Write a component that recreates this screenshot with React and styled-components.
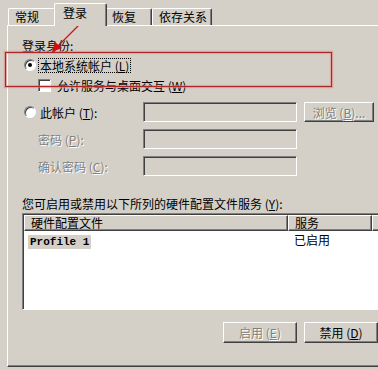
import React from 'react'
import styled, { createGlobalStyle } from 'styled-components'

const Global = createGlobalStyle`
  html, body { margin: 0; padding: 0; background: #d4d0c8; }
  body { font-family: "Noto Sans CJK SC", "DejaVu Sans", sans-serif; font-size: 12px; color: #000; }
`

const Window = styled.div`
  position: relative;
  width: 378px;
  height: 370px;
  overflow: hidden;
  background: #d4d0c8;
  padding: 3px 0 0 7px;
  box-sizing: border-box;
`

const TabRow = styled.div`
  display: flex;
  align-items: flex-end;
  height: 22px;
  padding-left: 1px;
`

const Tab = styled.div`
  position: relative;
  box-sizing: border-box;
  flex: none;
  width: ${p => p.$w}px;
  height: ${p => (p.$active ? '23px' : '17px')};
  margin: ${p => (p.$active ? '0 -2px -1px -2px' : '0')};
  z-index: ${p => (p.$active ? 2 : 1)};
  padding: ${p => (p.$active ? '2px 0 0 8px' : '1px 0 0 6px')};
  background: #d4d0c8;
  border-top: 1px solid #fff;
  border-left: 1px solid #fff;
  border-right: 1px solid #404040;
  box-shadow: inset -1px 0 #808080;
  border-radius: 2px 2px 0 0;
  line-height: 14px;
  white-space: nowrap;
`

const Panel = styled.div`
  display: flex;
  flex-direction: column;
  box-sizing: border-box;
  width: 380px;
  height: 342px;
  border-top: 1px solid #fff;
  border-left: 1px solid #fff;
  border-bottom: 1px solid #404040;
  box-shadow: inset 0 -1px #808080;
  padding-left: 14px;
`

const Label = styled.div`
  line-height: 13px;
  height: 13px;
  margin-top: ${p => p.$top || 0}px;
  white-space: nowrap;
  color: ${p => (p.$disabled ? '#808080' : '#000')};
  text-shadow: ${p => (p.$disabled ? '1px 1px #fff' : 'none')};
`

const OptionRow = styled.div`
  display: flex;
  align-items: center;
  height: 14px;
  margin-top: ${p => p.$top || 0}px;
  padding-left: ${p => p.$indent || 0}px;
  white-space: nowrap;
`

const Radio = styled.span`
  position: relative;
  box-sizing: border-box;
  flex: none;
  width: 12px;
  height: 12px;
  border-radius: 50%;
  background: #fff;
  border: 1px solid;
  border-color: #808080 #fff #fff #808080;
  box-shadow: inset 1px 1px #404040;
  margin-right: ${p => p.$gap || 4}px;

  &::after {
    content: '';
    display: ${p => (p.$checked ? 'block' : 'none')};
    position: absolute;
    left: 3px;
    top: 3px;
    width: 4px;
    height: 4px;
    border-radius: 50%;
    background: #000;
  }
`

const Check = styled.span`
  box-sizing: border-box;
  flex: none;
  width: 13px;
  height: 13px;
  background: #fff;
  border: 1px solid;
  border-color: #808080 #fff #fff #808080;
  box-shadow: inset 1px 1px #404040;
  margin-right: 6px;
`

const Focus = styled.span`
  outline: 1px dotted #000;
  outline-offset: 0;
  padding: 0 1px;
  line-height: 13px;
`

const Fields = styled.div`
  display: grid;
  grid-template-columns: 114px 154px 70px;
  grid-auto-rows: 20px;
  column-gap: 7px;
  row-gap: 7px;
  margin-top: 10px;
  align-items: center;
`

const FieldLabel = styled.div`
  display: flex;
  align-items: center;
  padding-left: ${p => p.$indent || 0}px;
  white-space: nowrap;
  color: ${p => (p.$disabled ? '#808080' : '#000')};
  text-shadow: ${p => (p.$disabled ? '1px 1px #fff' : 'none')};
`

const Input = styled.div`
  box-sizing: border-box;
  height: 20px;
  background: #d4d0c8;
  border: 1px solid;
  border-color: #808080 #fff #fff #808080;
  box-shadow: inset 1px 1px #404040, inset -1px -1px #d4d0c8;
`

const Button = styled.div`
  box-sizing: border-box;
  width: ${p => p.$w || 74}px;
  height: ${p => p.$h || 21}px;
  display: flex;
  align-items: center;
  justify-content: center;
  background: #d4d0c8;
  border: 1px solid;
  border-color: #fff #404040 #404040 #fff;
  box-shadow: inset -1px -1px #808080;
  white-space: nowrap;
  color: ${p => (p.$disabled ? '#808080' : '#000')};
  text-shadow: ${p => (p.$disabled ? '1px 1px #fff' : 'none')};
`

const ListBox = styled.div`
  box-sizing: border-box;
  width: 362px;
  height: 97px;
  margin-top: 3px;
  background: #fff;
  border: 1px solid;
  border-color: #808080 #fff #fff #808080;
  box-shadow: inset 1px 1px #404040;
  padding: 1px 0 0 1px;
`

const HeaderRow = styled.div`
  display: flex;
  height: 16px;
`

const HeaderCell = styled.div`
  box-sizing: border-box;
  width: ${p => (p.$w ? `${p.$w}px` : 'auto')};
  flex: ${p => (p.$w ? 'none' : 1)};
  height: 16px;
  line-height: 14px;
  padding-left: 6px;
  background: #d4d0c8;
  border: 1px solid;
  border-color: #fff #404040 #404040 #fff;
  box-shadow: inset -1px -1px #808080;
  white-space: nowrap;
`

const DataRow = styled.div`
  display: flex;
  height: 14px;
  margin-top: 2px;
  line-height: 14px;
`

const NameCell = styled.div`
  width: 263px;
  padding-left: 4px;
  box-sizing: border-box;
`

const Selected = styled.span`
  display: inline-block;
  background: #d4d0c8;
  padding: 0 2px;
  font-family: "Liberation Mono", "DejaVu Sans Mono", monospace;
  font-size: 11px;
  font-weight: bold;
`

const ServiceCell = styled.div`
  padding-left: 7px;
`

const ButtonRow = styled.div`
  display: flex;
  justify-content: flex-end;
  gap: 7px;
  width: 356px;
  margin-top: 12px;
`

const Highlight = styled.div`
  position: absolute;
  left: 5px;
  top: 52px;
  width: 327px;
  height: 35px;
  box-sizing: border-box;
  border: 1px solid #a82828;
  box-shadow: 0 0 1px 1px rgba(230, 120, 120, 0.6), inset 0 0 1px 1px rgba(230, 120, 120, 0.5);
  pointer-events: none;
`

const Arrow = styled.svg`
  position: absolute;
  left: 0;
  top: 0;
  pointer-events: none;
`

const Mn = ({ k }) => (
  <>
    {' ('}
    <u>{k}</u>
    {')'}
  </>
)

export default function App() {
  return (
    <>
      <Global />
      <Window>
        <TabRow>
          <Tab $w={48}>常规</Tab>
          <Tab $w={53} $active>登录</Tab>
          <Tab $w={47}>恢复</Tab>
          <Tab $w={60}>依存关系</Tab>
        </TabRow>
        <Panel>
          <Label $top={13}>登录身份:</Label>
          <OptionRow $top={6} $indent={2}>
            <Radio $checked $gap={3} />
            <Focus>
              本地系统帐户<Mn k="L" />
            </Focus>
          </OptionRow>
          <OptionRow $top={6} $indent={16}>
            <Check />
            <span>
              允许服务与桌面交互<Mn k="W" />
            </span>
          </OptionRow>
          <Fields>
            <FieldLabel $indent={2}>
              <Radio $gap={4} />
              此帐户<Mn k="T" />:
            </FieldLabel>
            <Input />
            <Button $w={70} $h={20} $disabled>
              浏览<Mn k="B" />...
            </Button>
            <FieldLabel $indent={16} $disabled>
              密码<Mn k="P" />:
            </FieldLabel>
            <Input />
            <div />
            <FieldLabel $indent={16} $disabled>
              确认密码<Mn k="C" />:
            </FieldLabel>
            <Input />
            <div />
          </Fields>
          <Label $top={21}>
            您可启用或禁用以下所列的硬件配置文件服务<Mn k="Y" />:
          </Label>
          <ListBox>
            <HeaderRow>
              <HeaderCell $w={264}>硬件配置文件</HeaderCell>
              <HeaderCell $w={84}>服务</HeaderCell>
              <HeaderCell />
            </HeaderRow>
            <DataRow>
              <NameCell>
                <Selected>Profile 1</Selected>
              </NameCell>
              <ServiceCell>已启用</ServiceCell>
            </DataRow>
          </ListBox>
          <ButtonRow>
            <Button $disabled>
              启用<Mn k="E" />
            </Button>
            <Button>
              禁用<Mn k="D" />
            </Button>
          </ButtonRow>
        </Panel>
        <Highlight />
        <Arrow width="378" height="370" viewBox="0 0 378 370">
          <line x1="92" y1="12" x2="58" y2="46" stroke="#c41a1a" strokeWidth="1.2" />
          <polygon points="52,52 55,42 62,48" fill="#d01010" />
        </Arrow>
      </Window>
    </>
  )
}
